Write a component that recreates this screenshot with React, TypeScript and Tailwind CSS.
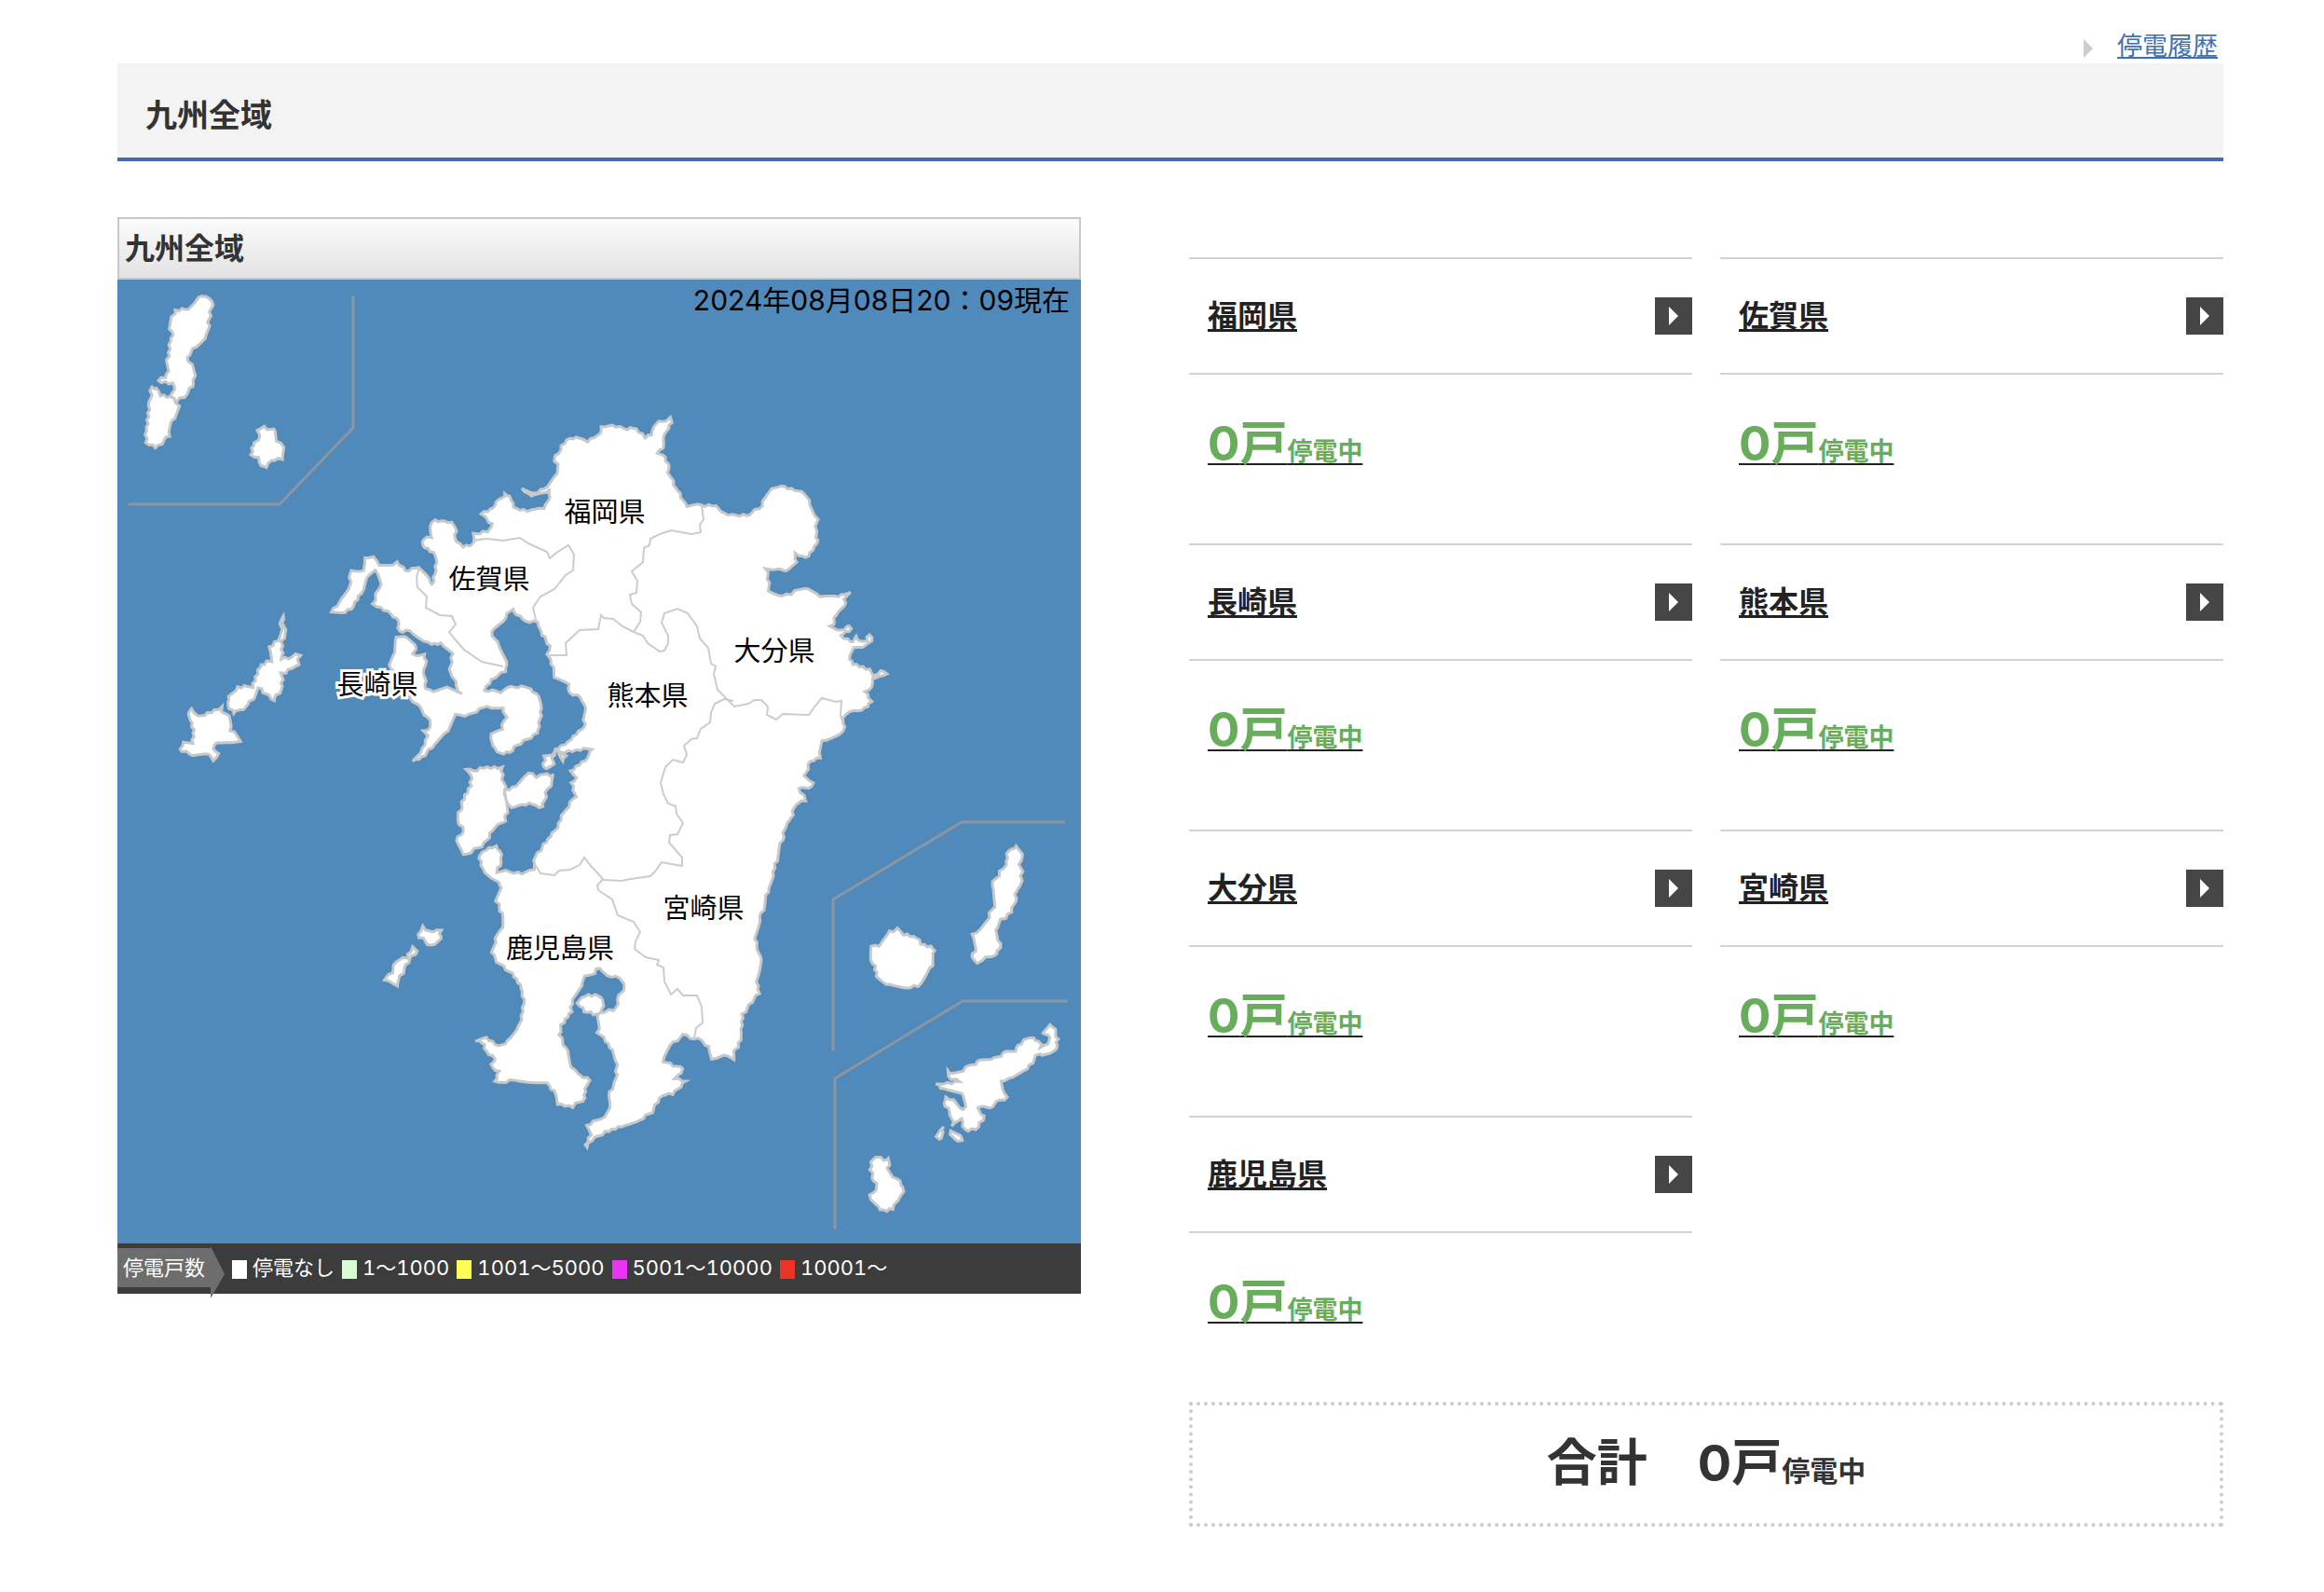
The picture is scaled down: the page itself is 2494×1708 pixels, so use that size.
interface Prefecture {
  name: string;
  count: number;
  x: number;
  y: number;
}

const prefectures: Prefecture[] = [
  { name: '福岡県', count: 0, x: 649, y: 560 },
  { name: '佐賀県', count: 0, x: 525, y: 632 },
  { name: '長崎県', count: 0, x: 405, y: 745 },
  { name: '熊本県', count: 0, x: 695, y: 757 },
  { name: '大分県', count: 0, x: 831, y: 709 },
  { name: '宮崎県', count: 0, x: 755, y: 985 },
  { name: '鹿児島県', count: 0, x: 601, y: 1028 },
];

const legend = [
  { label: '停電なし', color: 'bg-white' },
  { label: '1～1000', color: 'bg-[#d9fbd6]' },
  { label: '1001～5000', color: 'bg-[#ffff54]' },
  { label: '5001～10000', color: 'bg-[#e933f5]' },
  { label: '10001～', color: 'bg-[#eb3323]' },
];

const mainland =
  '507,585 508,573 522,570 528,562 520,555 516,551 530,545 532,538 540,535 542,529 548,532 549,537 552,543 558,548 570,547 583,545 588,538 590,525 580,530 570,533 562,528 560,524 567,526 573,529 587,522 598,508 599,498 595,495 596,489 600,487 602,478 612,470 618,469 630,473 642,468 645,457 653,457 673,460 683,460 692,469 700,467 702,458 707,451 715,452 718,448 720,453 715,462 713,470 712,482 706,485 715,490 717,503 720,513 727,527 735,540 737,542 753,542 768,543 777,551 790,553 805,553 817,542 823,530 828,525 842,522 853,525 863,530 872,545 877,557 876,573 877,583 872,590 868,597 857,597 853,593 855,603 843,613 832,610 823,610 825,633 840,640 853,635 867,632 880,639 900,641 907,636 912,635 907,643 905,653 897,660 895,670 890,673 903,677 912,671 914,675 902,683 917,689 920,682 922,688 930,687 933,681 936,688 930,693 917,695 912,707 915,713 933,718 937,725 945,720 952,723 943,725 935,728 935,737 928,742 935,752 928,760 912,763 905,770 907,780 900,787 883,795 880,812 870,817 863,832 873,840 868,846 857,846 864,858 853,863 850,878 843,887 838,905 832,927 830,940 825,953 815,988 811,1007 812,1020 818,1030 813,1050 814,1065 797,1088 796,1108 792,1123 786,1128 787,1138 777,1132 765,1136 760,1123 752,1116 745,1114 733,1110 720,1122 712,1138 733,1147 724,1157 736,1160 722,1174 710,1175 700,1193 683,1203 667,1208 650,1215 635,1223 630,1231 628,1228 634,1218 630,1208 648,1198 655,1185 653,1175 662,1157 662,1138 655,1123 642,1108 643,1087 658,1084 663,1077 664,1068 671,1060 665,1049 652,1046 643,1038 638,1043 627,1047 625,1058 615,1073 613,1085 603,1100 601,1110 608,1128 613,1145 620,1152 633,1159 627,1168 628,1178 615,1187 598,1185 597,1173 587,1163 547,1160 531,1160 535,1150 527,1142 532,1135 522,1128 517,1118 510,1117 522,1113 535,1122 548,1115 557,1102 562,1077 560,1060 547,1042 533,1032 528,1022 532,1007 538,995 539,980 533,967 537,953 535,947 527,942 518,932 514,917 522,912 532,908 537,913 538,925 533,935 543,933 560,938 573,933 573,923 580,912 590,897 598,887 607,868 618,855 613,840 618,835 613,828 633,810 635,803 602,808 595,805 613,793 627,780 628,758 622,748 612,743 610,735 595,727 591,705 587,702 590,693 580,678 577,668 560,665 550,653 540,665 527,678 535,693 545,713 542,720 528,730 520,740 537,743 548,737 567,737 577,747 581,760 577,787 555,800 547,807 537,809 528,800 527,787 538,782 543,770 540,760 523,758 503,767 490,767 478,787 463,802 453,813 443,817 453,803 458,790 455,785 463,777 455,767 450,755 440,750 430,730 417,713 423,700 425,683 435,683 447,693 443,703 455,702 458,713 455,723 457,738 465,742 480,737 495,745 488,732 483,722 485,702 473,690 463,692 455,687 447,683 440,677 428,677 428,667 420,658 401,648 403,637 408,627 403,612 393,620 388,637 377,653 367,659 356,657 367,643 375,627 377,613 390,612 392,600 400,598 407,605 422,606 427,602 435,613 450,608 460,622 465,627 467,612 468,595 453,585 455,578 462,577 462,565 467,558 477,560 485,560 490,567 488,577 497,586';

const islands = [
  // 対馬
  '217,316 226,320 228,327 225,335 223,353 220,363 208,375 202,383 207,395 209,412 200,423 188,433 182,425 188,418 185,412 170,408 180,402 180,378 185,363 182,353 188,332 203,332 210,320',
  '163,415 169,416 172,425 183,425 191,435 185,452 182,468 167,480 157,475 157,458 160,432',
  // 壱岐
  '283,459 297,463 297,473 304,480 303,492 290,493 286,501 280,500 277,492 270,488 272,474 277,472 277,463',
  // 五島
  '305,661 303,668 306,680 302,693 302,708 317,703 322,703 320,712 313,718 303,722 302,740 293,753 288,747 277,738 267,757 258,762 250,766 243,753 245,747 255,737 270,737 280,712 290,710 290,695 298,687 302,670',
  '205,761 212,767 220,768 237,758 238,763 247,768 248,783 258,795 250,798 232,797 230,803 236,810 230,815 222,808 203,810 192,803 197,795 205,797 208,783 203,773 203,763',
  // 甑島
  '453,995 465,1000 473,998 474,1008 462,1015 448,1002',
  '442,1017 447,1020 439,1033 433,1040 426,1059 413,1052 420,1043 425,1032 437,1028',
  // 天草
  '523,823 538,823 542,848 545,863 542,880 530,887 527,895 517,908 497,917 490,902 497,892 492,880 495,860 505,843 507,833 500,827 508,827',
  '542,848 553,842 567,831 580,833 595,831 588,847 582,867 572,863 560,862 548,867 543,858',
  '584,812 597,807 593,813 593,823 583,823',
  '600,808 606,810 603,817',
  // 桜島
  '628,1068 642,1067 648,1073 647,1083 637,1088 627,1085 620,1077',
  // 種子島・屋久島
  '1092,907 1098,920 1094,927 1097,940 1092,953 1090,967 1085,978 1075,987 1069,998 1073,1012 1070,1025 1062,1025 1050,1032 1044,1027 1047,1013 1043,1002 1052,998 1067,973 1065,950 1073,935 1079,928 1080,920 1085,910',
  '962,997 970,1003 980,1005 992,1014 1002,1017 1003,1023 999,1040 985,1057 973,1059 950,1057 942,1047 938,1033 934,1025 935,1014 943,1015 955,1000',
  // 奄美・徳之島
  '1127,1099 1130,1101 1136,1115 1133,1125 1122,1131 1115,1130 1103,1147 1083,1157 1074,1160 1076,1170 1081,1177 1070,1182 1062,1190 1050,1188 1057,1198 1047,1212 1035,1212 1032,1200 1022,1208 1020,1192 1013,1183 1015,1177 1023,1180 1033,1190 1037,1187 1033,1172 1013,1168 1004,1163 1017,1162 1030,1160 1017,1155 1017,1149 1023,1153 1040,1145 1053,1137 1067,1135 1080,1128 1090,1128 1092,1120 1110,1113 1115,1117 1117,1125 1125,1120 1125,1110 1118,1107',
  '1012,1209 1013,1215 1007,1223 1004,1219',
  '1020,1214 1032,1218 1032,1225 1021,1220',
  '940,1241 945,1243 955,1243 953,1257 962,1265 970,1274 963,1287 958,1296 948,1299 940,1292 934,1283 941,1277 937,1263 934,1255 937,1243',
];

const borders = [
  '507,580 522,578 540,580 558,577 567,583 587,592 590,599 597,593 610,585 616,595 615,612 607,617 595,632 580,640 572,652 575,665',
  '450,608 447,620 448,630 458,640 457,652 472,660 485,661 489,670 482,678 490,688 498,697 517,710 540,715',
  '590,703 608,703 607,690 622,676 642,675 645,660 648,663 658,664 668,672 680,678 690,682 695,690 708,699 713,698 717,690 717,682 710,668 713,658 727,653 738,658 748,672 751,685 760,695 763,712 768,715 766,723 770,740 788,758 803,755 810,751 817,751 824,758 823,767 833,772 840,766 868,767 875,757 882,749 897,753 903,752 902,768 905,777',
  '753,542 755,557 751,563 752,571 742,573 720,569 708,573 698,578 697,585 691,588 690,603 678,613 684,623 683,636 676,638 678,648 688,657 687,667 680,678',
  '787,752 777,750 767,755 763,765 762,775 752,782 748,792 742,793 734,800 737,810 733,818 722,815 714,823 709,840 712,852 717,862 725,865 726,873 733,883 727,895 719,896 718,904 732,920 732,929 710,925 703,935 698,940 677,943 667,945 648,944 635,930 627,920 622,928 612,933 600,934 595,939 580,937 574,927',
  '647,943 641,950 642,955 657,965 663,982 680,989 687,1000 682,1010 681,1018 693,1027 707,1030 705,1035 712,1038 713,1053 720,1067 727,1061 733,1068 748,1068 753,1080 754,1097 747,1103 745,1113',
];

const insetLines = [
  '379,317 379,459 300,541 138,541',
  '1143,882 1032,882 894,965 894,1127',
  '1146,1074 1033,1074 896,1157 896,1319',
];

// Breaks every coast segment into short steps and shifts them a little, so the shore looks ragged
function roughen(points: string, amount: number) {
  const list = points.split(' ').map((p) => p.split(',').map(Number));
  const out: string[] = [];
  list.forEach(([x1, y1], i) => {
    const [x2, y2] = list[(i + 1) % list.length];
    const length = Math.hypot(x2 - x1, y2 - y1);
    const steps = Math.max(1, Math.round(length / 4));
    for (let s = 0; s < steps; s++) {
      const t = s / steps;
      const noise = Math.sin(x1 * 12.9 + y1 * 78.2 + s * 37.7) * 43758.5;
      const shift = (noise - Math.floor(noise) - 0.5) * 2 * amount;
      const x = x1 + (x2 - x1) * t - ((y2 - y1) / length) * shift;
      const y = y1 + (y2 - y1) * t + ((x2 - x1) / length) * shift;
      out.push(`${x.toFixed(1)},${y.toFixed(1)}`);
    }
  });
  return out.join(' ');
}

function KyushuMap() {
  return (
    <svg viewBox="126 300 1034 1034" className="block w-full" role="img" aria-label="九州全域">
      <g fill="none" stroke="#8b96a0" strokeWidth="3">
        {insetLines.map((points) => (
          <polyline key={points} points={points} />
        ))}
      </g>
      <g fill="#fff" stroke="#c6c8ca" strokeWidth="3">
        <polygon points={roughen(mainland, 1.6)} />
        {islands.map((points) => (
          <polygon key={points} points={roughen(points, 2)} />
        ))}
      </g>
      <g fill="none" stroke="#ccc" strokeWidth="2">
        {borders.map((points) => (
          <polyline key={points} points={points} />
        ))}
      </g>
      <g fontSize="29" textAnchor="middle" fill="#000" stroke="#fff" strokeWidth="6" paintOrder="stroke">
        {prefectures.map((pref) => (
          <text key={pref.name} x={pref.x} y={pref.y}>
            {pref.name}
          </text>
        ))}
      </g>
    </svg>
  );
}

function PrefectureCard({ pref }: { pref: Prefecture }) {
  return (
    <section className="h-[307px]">
      <h3 className="border-y-2 border-[#d3d3d3]">
        <a href="#" className="flex h-[122px] items-center justify-between pl-5">
          <span className="text-[32px] leading-10 font-bold text-[#222] underline decoration-[3px] underline-offset-[3px]">
            {pref.name}
          </span>
          <span className="flex size-10 items-center justify-center bg-[#464646]">
            <svg width="10" height="20" viewBox="0 0 10 20" fill="#fff">
              <path d="M0 0 10 10 0 20z" />
            </svg>
          </span>
        </a>
      </h3>
      <p className="mt-[38px] pl-5 leading-[72px] font-bold">
        <a href="#" className="text-[51px] text-[#222] underline decoration-2 underline-offset-[3px]">
          <span className="text-[#68ad5c]">
            {pref.count}戸<span className="text-[27px]">停電中</span>
          </span>
        </a>
      </p>
    </section>
  );
}

export default function App() {
  return (
    <div className="min-h-screen bg-white pr-[108px] pl-[126px] font-[Inter,'Noto_Sans_CJK_JP',sans-serif] text-[#333]">
      <div className="flex h-[68px] items-center justify-end gap-[26px] pt-8 pr-[6px]">
        <svg width="10" height="20" viewBox="0 0 10 20" className="mt-1" fill="#ccc">
          <path d="M0 0 10 10 0 20z" />
        </svg>
        <a href="#" className="text-[27px] leading-9 text-[#3f70b4] underline decoration-2 underline-offset-[2px]">
          停電履歴
        </a>
      </div>

      <h1 className="border-b-4 border-[#426cad] bg-[#f3f3f3] pt-[31px] pb-[21px] pl-[30px] text-[34px] leading-[49px] font-bold">
        九州全域
      </h1>

      <div className="mt-[60px] grid grid-cols-[1034fr_1110fr] items-start gap-[116px]">
        <div>
          <h2 className="border-2 border-[#c8c8c8] bg-linear-to-b from-[#fcfcfc] to-[#e2e2e2] pl-[6px] text-[32px] leading-[63px] font-bold">
            九州全域
          </h2>
          <div className="relative bg-[#508abb]">
            <KyushuMap />
            <p className="absolute top-0 right-3 text-[30px] leading-[44px] text-black">
              2024年08月08日20：09現在
            </p>
          </div>
          <div className="flex h-[54px] items-start bg-[#3c3c3c] text-[22px] leading-[42px] text-white">
            <span className="mt-[5px] w-[100px] bg-[#6d6d6d] pl-[6px]">停電戸数</span>
            <svg width="15" height="56" viewBox="0 0 15 56" className="mt-[3px] mr-2" fill="#6d6d6d">
              <path d="M0 0 15 30 0 56z" />
            </svg>
            <ul className="mt-[5px] flex gap-2 tabular-nums">
              {legend.map((item) => (
                <li key={item.label} className="flex items-center gap-[6px]">
                  <span className={`mt-1 h-5 w-4 ${item.color}`} />
                  {item.label}
                </li>
              ))}
            </ul>
          </div>
        </div>

        <div className="pt-[43px]">
          <div className="grid grid-cols-2 gap-x-[30px]">
            {prefectures.map((pref) => (
              <PrefectureCard key={pref.name} pref={pref} />
            ))}
          </div>
          <p className="border-4 border-dotted border-[#ccc] pt-[26px] pb-5 text-center text-[54px] leading-[72px] font-bold">
            合計　0戸<span className="text-[30px]">停電中</span>
          </p>
        </div>
      </div>
    </div>
  );
}
